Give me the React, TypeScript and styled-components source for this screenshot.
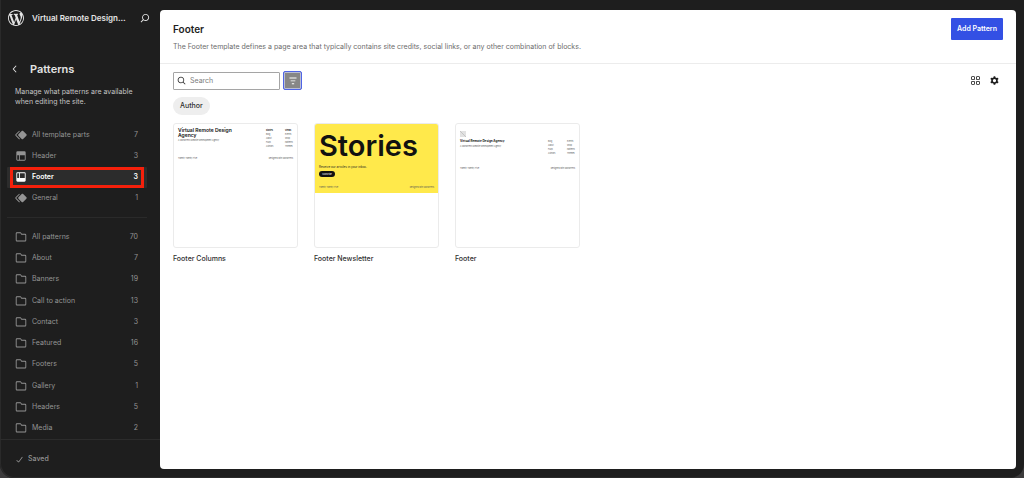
import React from "react";
import styled, { createGlobalStyle, css } from "styled-components";

const GlobalStyle = createGlobalStyle`
  *, *::before, *::after { box-sizing: border-box; }
  html { background: #3c3b3c; }
  body {
    margin: 0;
    font-family: Inter, "Liberation Sans", sans-serif;
    font-size: 7px;
    line-height: 10px;
    color: #2f2f2f;
  }
  button, input { font: inherit; color: inherit; }
  h1, h2, p, ul { margin: 0; padding: 0; }
  a { color: inherit; text-decoration: none; }
`;

/* ---------- icons ---------- */

const paths = {
  symbol:
    "M21.3 10.8l-5.6-5.6c-.7-.7-1.8-.7-2.5 0l-5.6 5.6c-.7.7-.7 1.8 0 2.5l5.6 5.6c.3.3.8.5 1.2.5s.9-.2 1.2-.5l5.6-5.6c.8-.7.8-1.9.1-2.5zm-17.6 1L10 5.5l-1-1-6.3 6.3c-.7.7-.7 1.8 0 2.5L9 19.5l1.1-1.1-6.3-6.3c-.2 0-.2-.2-.1-.3z",
  header:
    "M18.5 10.5H10v8h8a.5.5 0 00.5-.5v-7.5zm-10 0h-3V18a.5.5 0 00.5.5h2.5v-8zM6 4h12a2 2 0 012 2v12a2 2 0 01-2 2H6a2 2 0 01-2-2V6a2 2 0 012-2z",
  footer:
    "M18 5.5h-8v8h8.5V6a.5.5 0 00-.5-.5zm-9.5 8h-3V6a.5.5 0 01.5-.5h2.5v8zM6 4h12a2 2 0 012 2v12a2 2 0 01-2 2H6a2 2 0 01-2-2V6a2 2 0 012-2z",
  folder:
    "M12.848 8a1 1 0 0 1-.914-.594l-.723-1.63a.5.5 0 0 0-.447-.276H5a.5.5 0 0 0-.5.5v11.5a.5.5 0 0 0 .5.5h14a.5.5 0 0 0 .5-.5v-9A.5.5 0 0 0 19 8h-6.152Zm.612-1.5a.5.5 0 0 1-.462-.31l-.445-1.084A2 2 0 0 0 10.763 4H5a2 2 0 0 0-2 2v11.5a2 2 0 0 0 2 2h14a2 2 0 0 0 2-2v-9a2 2 0 0 0-2-2h-5.54Z",
  search:
    "M13 5c-3.3 0-6 2.7-6 6 0 1.4.5 2.7 1.3 3.7l-3.8 3.8 1.1 1.1 3.8-3.8c1 .8 2.3 1.3 3.7 1.3 3.3 0 6-2.7 6-6S16.3 5 13 5zm0 10.5c-2.5 0-4.5-2-4.5-4.5s2-4.5 4.5-4.5 4.5 2 4.5 4.5-2 4.5-4.5 4.5z",
  funnel: "M10 17.5H14V16H10V17.5ZM6 6V7.5H18V6H6ZM8 12.5H16V11H8V12.5Z",
  grid:
    "M6 5.5h3a.5.5 0 01.5.5v3a.5.5 0 01-.5.5H6a.5.5 0 01-.5-.5V6a.5.5 0 01.5-.5zM4 6a2 2 0 012-2h3a2 2 0 012 2v3a2 2 0 01-2 2H6a2 2 0 01-2-2V6zm11-.5h3a.5.5 0 01.5.5v3a.5.5 0 01-.5.5h-3a.5.5 0 01-.5-.5V6a.5.5 0 01.5-.5zM13 6a2 2 0 012-2h3a2 2 0 012 2v3a2 2 0 01-2 2h-3a2 2 0 01-2-2V6zm5 8.500h-3a.5.5 0 00-.5.5v3a.5.5 0 00.5.5h3a.5.5 0 00.5-.5v-3a.5.5 0 00-.5-.5zM15 13a2 2 0 00-2 2v3a2 2 0 002 2h3a2 2 0 002-2v-3a2 2 0 00-2-2h-3zm-9 1.500h3a.5.5 0 01.5.5v3a.5.5 0 01-.5.5H6a.5.5 0 01-.5-.5v-3a.5.5 0 01.5-.5zM4 15a2 2 0 012-2h3a2 2 0 012 2v3a2 2 0 01-2 2H6a2 2 0 01-2-2v-3z",
  cog:
    "M10.289 4.836A1 1 0 0111.275 4h1.306a1 1 0 01.987.836l.244 1.466c.787.26 1.503.679 2.108 1.218l1.393-.522a1 1 0 011.216.437l.653 1.13a1 1 0 01-.23 1.273l-1.148.944a6.025 6.025 0 010 2.435l1.149.946a1 1 0 01.23 1.272l-.653 1.13a1 1 0 01-1.216.437l-1.394-.522c-.605.54-1.32.958-2.108 1.218l-.244 1.466a1 1 0 01-.987.836h-1.306a1 1 0 01-.986-.836l-.244-1.466a5.995 5.995 0 01-2.108-1.218l-1.394.522a1 1 0 01-1.217-.436l-.653-1.131a1 1 0 01.23-1.272l1.149-.946a6.026 6.026 0 010-2.435l-1.148-.944a1 1 0 01-.23-1.272l.653-1.131a1 1 0 011.217-.437l1.393.522a5.994 5.994 0 012.108-1.218l.244-1.466zM14.929 12a3 3 0 11-6 0 3 3 0 016 0z",
  check: "M16.7 7.1l-6.3 8.5-3.3-2.5-.9 1.2 4.5 3.4L17.9 8z",
  chevronLeft: "M14.6 7l-1.2-1L8 12l5.4 6 1.2-1-4.600-5z",
  wordpress:
    "M20 10c0-5.51-4.49-10-10-10C4.48 0 0 4.49 0 10c0 5.52 4.48 10 10 10 5.51 0 10-4.48 10-10zM7.78 15.37L4.37 6.22c.55-.02 1.17-.08 1.17-.08.5-.06.44-1.13-.06-1.11 0 0-1.45.11-2.37.11-.18 0-.37 0-.58-.01C4.12 2.69 6.87 1.11 10 1.11c2.33 0 4.45.87 6.05 2.34-.68-.11-1.65.39-1.65 1.58 0 .74.45 1.36.9 2.1.35.61.55 1.36.55 2.46 0 1.49-1.4 5-1.4 5l-3.03-8.37c.54-.02.82-.17.82-.17.5-.05.44-1.25-.06-1.22 0 0-1.44.12-2.38.12-.87 0-2.33-.12-2.33-.12-.5-.03-.56 1.2-.06 1.22l.92.08 1.26 3.410zM17.410 10c.24-.64.74-1.87.43-4.25.7 1.29 1.05 2.71 1.05 4.25 0 3.29-1.73 6.24-4.4 7.78.97-2.59 1.94-5.2 2.92-7.78zM6.1 18.09C3.12 16.65 1.11 13.53 1.11 10c0-1.3.23-2.48.72-3.59C3.25 10.3 4.67 14.2 6.1 18.09zm4.03-6.63l2.58 6.98c-.86.29-1.76.45-2.71.45-.79 0-1.57-.11-2.29-.33.81-2.38 1.62-4.74 2.42-7.1z",
};

type IconName = keyof typeof paths;

const Svg = styled.svg`
  display: block;
  flex: none;
  fill: currentColor;
`;

function Icon({ name, size = 14, viewBox = "0 0 24 24" }: { name: IconName; size?: number; viewBox?: string }) {
  return (
    <Svg width={size} height={size} viewBox={viewBox} aria-hidden="true">
      <path d={paths[name]} fillRule="evenodd" />
    </Svg>
  );
}

/* ---------- shell ---------- */

const Shell = styled.div`
  display: grid;
  grid-template-columns: 160px minmax(0, 1fr);
  min-height: 100vh;
  background: #1e1e1e;
  box-shadow: inset 1px -1px 0 #2a2a2a;
  border-radius: 0 0 14px 14px;
`;

const Sidebar = styled.aside`
  display: flex;
  flex-direction: column;
  color: #949494;
`;

const SiteBar = styled.header`
  display: flex;
  align-items: center;
  height: 36px;
  padding: 0 8px;
  gap: 8px;
  color: #e4e4e4;
`;

const SiteName = styled.a`
  flex: 1;
  font-size: 8px;
  font-weight: 600;
  white-space: nowrap;
`;

const IconButton = styled.button`
  display: grid;
  place-items: center;
  padding: 0;
  border: 0;
  background: none;
  color: inherit;
  cursor: pointer;
`;

const SectionHead = styled.div`
  display: flex;
  align-items: center;
  gap: 8px;
  padding: 26px 8px 0;
  color: #e4e4e4;
`;

const SectionTitle = styled.h2`
  font-size: 11px;
  font-weight: 600;
  line-height: 14px;
`;

const Intro = styled.p`
  padding: 11px 24px 0 15px;
  color: #c4c4c4;
`;

const Lists = styled.nav`
  display: flex;
  flex: 1;
  flex-direction: column;
  margin-top: 17px;
  padding: 0 13px 0 7px;
`;

const List = styled.ul<{ $rows: number }>`
  display: grid;
  flex: ${(p) => p.$rows} 0 0;
  grid-auto-rows: minmax(21px, 1fr);
  list-style: none;
`;

const Divider = styled.hr`
  width: 100%;
  height: 1px;
  margin: 8px 0;
  border: 0;
  background: #2a2a2a;
`;

const ItemLink = styled.a<{ $current?: boolean }>`
  position: relative;
  display: flex;
  align-items: center;
  gap: 4px;
  height: 100%;
  padding: 0 9px 0 7px;
  ${(p) =>
    p.$current &&
    css`
      background: #2c2c2c;
      border-radius: 1px;
      color: #fff;
      font-weight: 600;
      &::after {
        content: "";
        position: absolute;
        inset: 0 3px;
        border: 3px solid #f4200b;
      }
    `}
`;

const ItemLabel = styled.span`
  flex: 1;
`;

const SaveBar = styled.footer`
  display: flex;
  align-items: center;
  gap: 2px;
  height: 39px;
  padding: 0 13px;
  border-top: 1px solid #2c2c2c;
  color: #949494;
  font-weight: 500;
`;

/* ---------- main panel ---------- */

const Panel = styled.main`
  margin: 10px 8px 9px 0;
  border-radius: 4px;
  background: #fff;
  overflow: hidden;
`;

const PanelHead = styled.header`
  display: flex;
  align-items: flex-start;
  justify-content: space-between;
  padding: 8px 13px 11px;
  border-bottom: 1px solid #ececec;
`;

const PanelTitle = styled.h1`
  padding-top: 4px;
  font-size: 10px;
  font-weight: 600;
  line-height: 14px;
  color: #1e1e1e;
`;

const PanelText = styled.p`
  padding-top: 6px;
  color: #6c6c6c;
`;

const AddButton = styled.button`
  height: 22px;
  padding: 0 6px;
  border: 0;
  border-radius: 1px;
  background: #3350e4;
  color: #fff;
  font-weight: 600;
  cursor: pointer;
`;

const Toolbar = styled.div`
  display: flex;
  align-items: center;
  justify-content: space-between;
  padding: 7px 15px 0 13px;
`;

const ToolGroup = styled.div<{ $gap: number }>`
  display: flex;
  align-items: center;
  gap: ${(p) => p.$gap}px;
  color: #1e1e1e;
`;

const SearchBox = styled.label`
  display: flex;
  align-items: center;
  gap: 2px;
  width: 107px;
  height: 18px;
  padding: 0 2px 0 1px;
  border: 1px solid #a5a5a5;
  border-radius: 1px;
  color: #2c2c2c;
  svg { transform: scaleX(-1); }
`;

const SearchInput = styled.input`
  width: 100%;
  min-width: 0;
  padding: 0;
  border: 0;
  outline: 0;
  background: none;
  &::placeholder { color: #7c7c7c; opacity: 1; }
`;

const FilterButton = styled(IconButton)`
  width: 19px;
  height: 19px;
  border: 1px solid #4f65e6;
  border-radius: 2px;
  background: #878787;
  box-shadow: inset 0 0 0 1px #b9bdd4;
  color: #fff;
`;

const Filters = styled.div`
  display: flex;
  padding: 7px 13px 8px;
`;

const Chip = styled.button`
  height: 18px;
  padding: 0 7px;
  border: 0;
  border-radius: 9px;
  background: #eee;
  color: #2f2f2f;
  font-weight: 500;
  cursor: pointer;
`;

const CardGrid = styled.ul`
  display: grid;
  grid-template-columns: repeat(auto-fill, 125px);
  gap: 16px;
  padding: 0 13px;
  list-style: none;
`;

const Card = styled.a`
  display: flex;
  flex-direction: column;
  gap: 6px;
  font-weight: 500;
`;

const Preview = styled.div`
  height: 125px;
  border: 1px solid #ebebeb;
  border-radius: 3px;
  background: #fff;
  color: #555;
  font-weight: 400;
  font-size: 2px;
  line-height: 4px;
  overflow: hidden;
`;

const Page = styled.div<{ $yellow?: boolean; $top: number }>`
  padding: ${(p) => p.$top}px 4px 4px;
  background: ${(p) => (p.$yellow ? "#ffe94b" : "transparent")};
`;

const Spread = styled.div<{ $top?: number }>`
  display: flex;
  justify-content: space-between;
  padding-top: ${(p) => p.$top ?? 0}px;
`;

const BrandName = styled.div<{ $small?: boolean }>`
  width: 54px;
  color: #111;
  font-size: ${(p) => (p.$small ? 3 : 5)}px;
  font-weight: ${(p) => (p.$small ? 700 : 600)};
  line-height: 5px;
`;

const LinkColumns = styled.div`
  display: grid;
  grid-template-columns: 19px 8px;
  white-space: nowrap;
`;

const ColumnTitle = styled.b`
  color: #111;
  font-weight: 700;
`;

const Placeholder = styled.svg`
  display: block;
  width: 6px;
  height: 6px;
  margin-bottom: 2px;
`;

const Headline = styled.div`
  color: #111;
  font-size: 29px;
  font-weight: 600;
  line-height: 30px;
`;

const Invite = styled.div`
  padding-top: 4px;
  color: #222;
  font-size: 3px;
`;

const Subscribe = styled.div`
  width: 16px;
  height: 6px;
  margin-top: 2px;
  border-radius: 3px;
  background: #111;
  color: #fff;
  line-height: 6px;
  text-align: center;
`;

/* ---------- data ---------- */

type Item = { icon: IconName; label: string; count: number; current?: boolean };

const parts: Item[] = [
  { icon: "symbol", label: "All template parts", count: 7 },
  { icon: "header", label: "Header", count: 3 },
  { icon: "footer", label: "Footer", count: 3, current: true },
  { icon: "symbol", label: "General", count: 1 },
];

const patterns: Item[] = (
  [
    ["All patterns", 70],
    ["About", 7],
    ["Banners", 19],
    ["Call to action", 13],
    ["Contact", 3],
    ["Featured", 16],
    ["Footers", 5],
    ["Gallery", 1],
    ["Headers", 5],
    ["Media", 2],
  ] as [string, number][]
).map(([label, count]) => ({ icon: "folder", label, count }));

const links = ["Blog", "Events", "About", "Shop", "FAQs", "Patterns", "Authors", "Themes"];

function ItemList({ items }: { items: Item[] }) {
  return (
    <List $rows={items.length}>
      {items.map((item) => (
        <li key={item.label}>
          <ItemLink href="#" $current={item.current} aria-current={item.current ? "page" : undefined}>
            <Icon name={item.icon} />
            <ItemLabel>{item.label}</ItemLabel>
            <span>{item.count}</span>
          </ItemLink>
        </li>
      ))}
    </List>
  );
}

function Credits({ top }: { top: number }) {
  return (
    <Spread $top={top}>
      <span>Twenty Twenty-Five</span>
      <span>Designed with WordPress</span>
    </Spread>
  );
}

function ColumnsPreview() {
  return (
    <Page $top={4}>
      <Spread>
        <div>
          <BrandName>Virtual Remote Design Agency</BrandName>
          <div>A WordPress Website Development Agency</div>
        </div>
        <LinkColumns>
          <ColumnTitle>Stories</ColumnTitle>
          <ColumnTitle>Views</ColumnTitle>
          {links.map((l) => <span key={l}>{l}</span>)}
        </LinkColumns>
      </Spread>
      <Credits top={8} />
    </Page>
  );
}

function NewsletterPreview() {
  return (
    <Page $yellow $top={7}>
      <Headline>Stories</Headline>
      <Invite>Receive our articles in your inbox.</Invite>
      <Subscribe>Subscribe</Subscribe>
      <Credits top={8} />
    </Page>
  );
}

function FooterPreview() {
  return (
    <Page $top={7}>
      <Placeholder viewBox="0 0 6 6" aria-hidden="true">
        <path d="M0 0h6v6H0z" fill="#e2e2e2" />
        <path d="M0 0l6 6" stroke="#a8a8a8" strokeWidth=".5" />
      </Placeholder>
      <Spread>
        <div>
          <BrandName $small>Virtual Remote Design Agency</BrandName>
          <div>A WordPress Website Development Agency</div>
        </div>
        <LinkColumns>
          {links.map((l) => <span key={l}>{l}</span>)}
        </LinkColumns>
      </Spread>
      <Credits top={11} />
    </Page>
  );
}

const cards = [
  { title: "Footer Columns", View: ColumnsPreview },
  { title: "Footer Newsletter", View: NewsletterPreview },
  { title: "Footer", View: FooterPreview },
];

export default function App() {
  return (
    <>
      <GlobalStyle />
      <Shell>
        <Sidebar>
          <SiteBar>
            <Icon name="wordpress" size={16} viewBox="0 0 20 20" />
            <SiteName href="#">Virtual Remote Design…</SiteName>
            <IconButton aria-label="Open command palette"><Icon name="search" size={14} /></IconButton>
          </SiteBar>
          <SectionHead>
            <IconButton aria-label="Back"><Icon name="chevronLeft" /></IconButton>
            <SectionTitle>Patterns</SectionTitle>
          </SectionHead>
          <Intro>Manage what patterns are available when editing the site.</Intro>
          <Lists aria-label="Patterns">
            <ItemList items={parts} />
            <Divider />
            <ItemList items={patterns} />
          </Lists>
          <SaveBar>
            <Icon name="check" size={13} />
            Saved
          </SaveBar>
        </Sidebar>
        <Panel>
          <PanelHead>
            <div>
              <PanelTitle>Footer</PanelTitle>
              <PanelText>
                The Footer template defines a page area that typically contains site credits, social links, or any
                other combination of blocks.
              </PanelText>
            </div>
            <AddButton>Add Pattern</AddButton>
          </PanelHead>
          <Toolbar>
            <ToolGroup $gap={3}>
              <SearchBox>
                <Icon name="search" size={13} />
                <SearchInput type="search" placeholder="Search" aria-label="Search" />
              </SearchBox>
              <FilterButton aria-label="Toggle filter display"><Icon name="funnel" size={14} /></FilterButton>
            </ToolGroup>
            <ToolGroup $gap={6}>
              <IconButton aria-label="Layout"><Icon name="grid" size={13} /></IconButton>
              <IconButton aria-label="View options"><Icon name="cog" size={13} /></IconButton>
            </ToolGroup>
          </Toolbar>
          <Filters>
            <Chip>Author</Chip>
          </Filters>
          <CardGrid>
            {cards.map(({ title, View }) => (
              <li key={title}>
                <Card href="#">
                  <Preview><View /></Preview>
                  {title}
                </Card>
              </li>
            ))}
          </CardGrid>
        </Panel>
      </Shell>
    </>
  );
}
